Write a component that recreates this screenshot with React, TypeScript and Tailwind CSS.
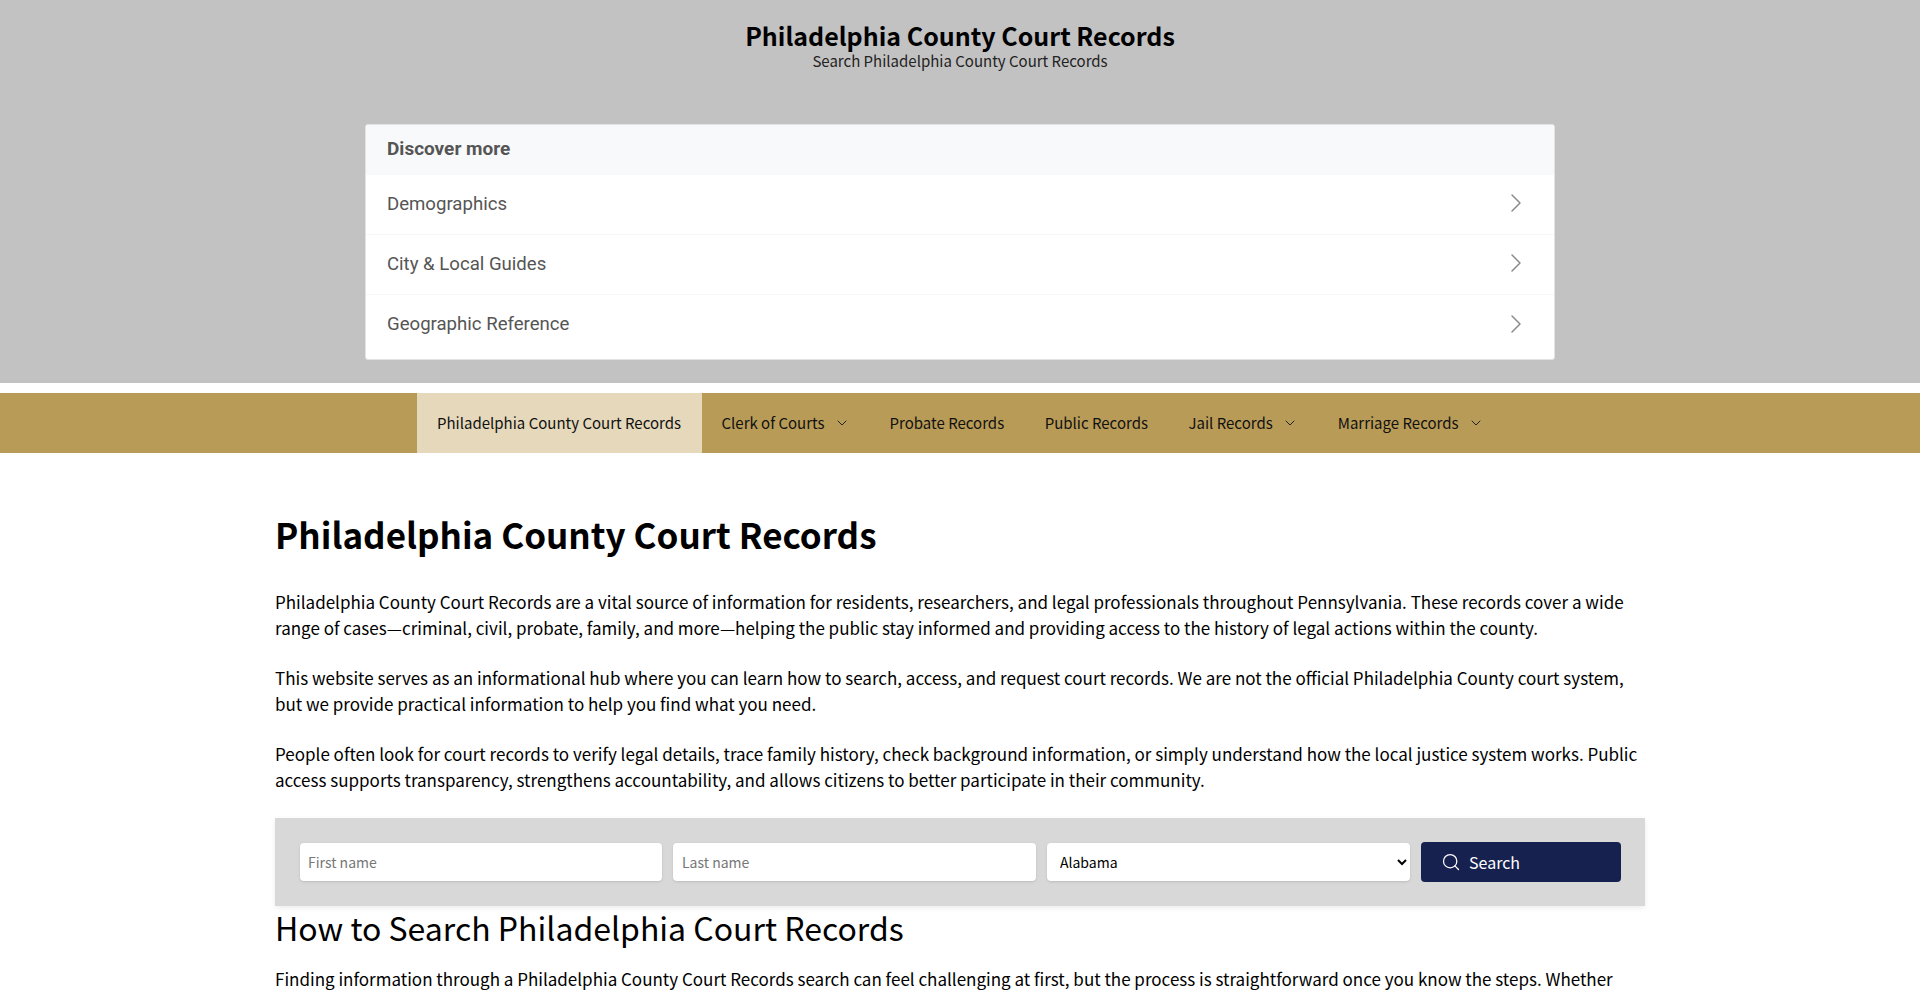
import { ChevronRight, ChevronDown, Search } from "lucide-react";

const src = "font-['Noto_Sans_CJK_SC','Noto_Sans_CJK_JP',sans-serif]";

function Row({ label, last }: { label: string; last?: boolean }) {
  return (
    <div className={`flex h-[60px] items-center justify-between pl-[21px] pr-[22px] ${last ? "" : "border-b border-[#f6f7f8]"}`}>
      <span className="font-['Roboto',sans-serif] text-[18.6px] text-[#555]">{label}</span>
      <ChevronRight className="mb-[3px] h-[32px] w-[32px] text-[#8a8a8a]" strokeWidth={1.1} />
    </div>
  );
}

function NavItem({ label, caret, active }: { label: string; caret?: boolean; active?: boolean }) {
  return (
    <div className={`flex h-full items-center pl-[20px] text-[15px] text-[#111] ${caret ? "pr-[20px]" : "pr-[20.5px]"} ${active ? "bg-[#e5d8bb]" : ""}`}>
      <span>{label}</span>
      {caret && <ChevronDown className="ml-[9px] h-[16px] w-[16px] text-[#222]" strokeWidth={1.5} />}
    </div>
  );
}

export default function App() {
  return (
    <div className={`h-[993px] w-full overflow-hidden bg-white text-black ${src}`}>
      <header className="flex h-[383px] flex-col items-center bg-[#c3c2c3] pt-[17px]">
        <div className="text-[25px] font-semibold leading-[36px]">Philadelphia County Court Records</div>
        <div className="mt-[1px] text-[15px] leading-[14px] text-[#222]">Search Philadelphia County Court Records</div>
        <div className="mt-[56px] w-[1190px] overflow-hidden rounded-[3px] border border-[#e3e3e3] bg-white pb-[4px]">
          <div className="flex h-[50px] items-center bg-[#f8f9fa] pb-[2px] pl-[21px] font-['Roboto',sans-serif] text-[19px] font-bold text-[#555]">
            Discover more
          </div>
          <Row label="Demographics" />
          <Row label="City & Local Guides" />
          <Row label="Geographic Reference" last />
        </div>
      </header>
      <nav className="mt-[10px] flex h-[60px] bg-[#b99b58] pl-[417px]">
        <NavItem label="Philadelphia County Court Records" active />
        <NavItem label="Clerk of Courts" caret />
        <NavItem label="Probate Records" />
        <NavItem label="Public Records" />
        <NavItem label="Jail Records" caret />
        <NavItem label="Marriage Records" caret />
      </nav>
      <main className="mx-auto w-[1370px] pt-[55px]">
        <h1 className="text-[35px] font-semibold leading-[52px]">Philadelphia County Court Records</h1>
        <div className="mt-[29px] space-y-[25px] text-[17px] leading-[25.5px]">
          <p>
            Philadelphia County Court Records are a vital source of information for residents, researchers, and legal professionals throughout Pennsylvania. These records cover a wide range of cases—criminal, civil, probate, family, and more—helping the public stay informed and providing access to the history of legal actions within the county.
          </p>
          <p>
            This website serves as an informational hub where you can learn how to search, access, and request court records. We are not the official Philadelphia County court system, but we provide practical information to help you find what you need.
          </p>
          <p>
            People often look for court records to verify legal details, trace family history, check background information, or simply understand how the local justice system works. Public access supports transparency, strengthens accountability, and allows citizens to better participate in their community.
          </p>
        </div>
        <div className="mt-[26px] flex h-[88px] items-center gap-[11px] bg-[#d8d8d8] pl-[25px] pr-[24px] shadow-[0_2px_6px_rgba(0,0,0,0.08)]">
          <input placeholder="First name" className="h-[38px] w-[362px] rounded-[4px] bg-white px-[8px] text-[14px] shadow-sm placeholder:text-[#777] outline-none" />
          <input placeholder="Last name" className="h-[38px] w-[363px] rounded-[4px] bg-white px-[9px] text-[14px] shadow-sm placeholder:text-[#777] outline-none" />
          <select className="h-[38px] w-[363px] rounded-[4px] bg-white px-[9px] text-[14px] shadow-sm outline-none">
            <option>Alabama</option>
          </select>
          <button className="flex h-[40px] w-[200px] items-center gap-[8px] rounded-[4px] bg-[#16214f] pl-[20px] text-[16px] text-white">
            <Search className="h-[20px] w-[20px]" strokeWidth={1.5} />
            Search
          </button>
        </div>
        <h2 className="text-[32px] font-normal leading-[42px]">How to Search Philadelphia Court Records</h2>
        <p className="mt-[18px] text-[17px] leading-[25.5px]">
          Finding information through a Philadelphia County Court Records search can feel challenging at first, but the process is straightforward once you know the steps. Whether you are looking for a case file or a court date, these tips will help.
        </p>
      </main>
    </div>
  );
}
